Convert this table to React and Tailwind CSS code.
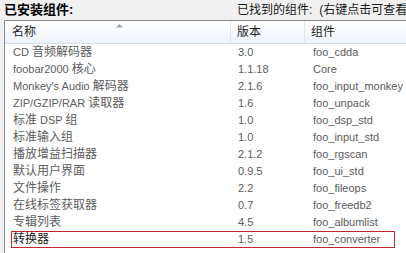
const rows = [
  ['CD 音频解码器', '3.0', 'foo_cdda'],
  ['foobar2000 核心', '1.1.18', 'Core'],
  ["Monkey's Audio 解码器", '2.1.6', 'foo_input_monkey'],
  ['ZIP/GZIP/RAR 读取器', '1.6', 'foo_unpack'],
  ['标准 DSP 组', '1.0', 'foo_dsp_std'],
  ['标准输入组', '1.0', 'foo_input_std'],
  ['播放增益扫描器', '2.1.2', 'foo_rgscan'],
  ['默认用户界面', '0.9.5', 'foo_ui_std'],
  ['文件操作', '2.2', 'foo_fileops'],
  ['在线标签获取器', '0.7', 'foo_freedb2'],
  ['专辑列表', '4.5', 'foo_albumlist'],
  ['转换器', '1.5', 'foo_converter'],
]

// Latin runs stay small (Tahoma-ish), CJK runs get 12px
const mixed = (s) =>
  s.split(/([\u3000-\u9fff\uff00-\uffef]+)/).map((p, i) =>
    i % 2 ? <span key={i} className="text-[12px]">{p}</span> : p
  )

export default function App() {
  return (
    <div
      className="w-[406px] h-[253px] overflow-hidden bg-[#f0f0f0] flex flex-col"
      style={{ fontFamily: '"Liberation Sans", "Noto Sans CJK SC", sans-serif' }}
    >
      {/* titles */}
      <div className="h-[20px] shrink-0 flex items-start whitespace-nowrap">
        <div className="pl-[4px] pt-[1px] w-[237px] shrink-0 text-[13px] leading-[17px] font-bold text-black">已安装组件:</div>
        <div className="pt-[3px] text-[12px] leading-[15px] text-[#1a1a1a] flex">
          <span>已找到的组件:</span>
          <span className="ml-[7px]">(右键点击可查看详细信息)</span>
        </div>
      </div>

      {/* list box */}
      <div className="ml-[4px] flex-1 bg-white border-l border-t border-[#828790] overflow-hidden">
        <div className="h-[23px] flex bg-gradient-to-b from-white to-[#eef3fa] border-b border-[#d5dfe9] text-[12px] leading-[22px] text-[#1e1e1e] whitespace-nowrap">
          <div className="relative w-[226px] shrink-0 pl-[7px] border-r border-[#e0e6ee]">
            名称
            <svg className="absolute left-[110px] top-[2px]" width="9" height="5" viewBox="0 0 9 5">
              <path d="M1 4.5 L4.5 1 L8 4.5 Z" fill="#9aa4b0" />
            </svg>
          </div>
          <div className="w-[74px] shrink-0 pl-[6px] border-r border-[#e0e6ee]">版本</div>
          <div className="flex-1 pl-[6px]">组件</div>
        </div>

        <div className="flex flex-col text-[11px] leading-[15px] text-[#5c5c5c] whitespace-nowrap">
          {rows.map((r, i) => {
            const last = i === rows.length - 1
            return (
              <div
                key={i}
                className={
                  last
                    ? 'h-[17px] ml-[6px] w-[384px] flex items-center border border-[#c0282d]'
                    : 'h-[17px] ml-[6px] w-[384px] flex items-center border border-transparent'
                }
              >
                <div className={last ? 'w-[226px] shrink-0 pl-[1px] text-[#222]' : 'w-[226px] shrink-0 pl-[1px]'}>{mixed(r[0])}</div>
                <div className="w-[75px] shrink-0">{r[1]}</div>
                <div className="flex-1">{r[2]}</div>
              </div>
            )
          })}
        </div>
      </div>
    </div>
  )
}
